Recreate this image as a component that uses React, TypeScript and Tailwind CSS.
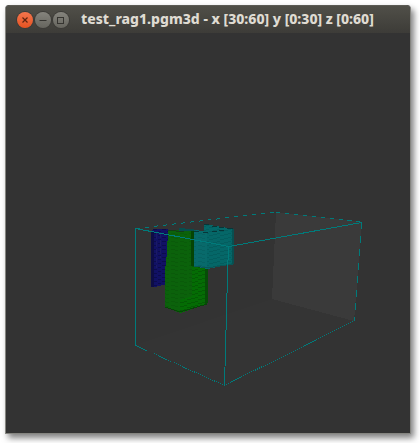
import type { ReactNode } from "react";

type ControlProps = { label: string; tone: string; children: ReactNode };

function WindowControl({ label, tone, children }: ControlProps) {
  return (
    <button
      type="button"
      aria-label={label}
      className={`flex size-4 items-center justify-center rounded-full shadow-[0_0_0_1px_#3c3b37] ${tone}`}
    >
      <svg viewBox="0 0 16 16" className="size-4" fill="none" stroke="#353430" aria-hidden="true">
        {children}
      </svg>
    </button>
  );
}

function TitleBar() {
  return (
    <header className="flex h-7 shrink-0 items-center rounded-t-sm border-t border-[#5c5b54] bg-linear-to-b from-[#504f48] to-[#3d3c38] pl-[11px]">
      <div className="flex gap-0.5">
        <WindowControl label="Close" tone="bg-linear-to-b from-[#f4754c] to-[#e5521f]">
          <path d="M5.5 5.5l5 5M10.5 5.5l-5 5" stroke="#5f2410" strokeWidth="1.2" />
        </WindowControl>
        <WindowControl label="Minimize" tone="bg-linear-to-b from-[#85847d] to-[#66655e]">
          <path d="M4.5 8.5h7" />
        </WindowControl>
        <WindowControl label="Maximize" tone="bg-linear-to-b from-[#85847d] to-[#66655e]">
          <rect x="4.5" y="5.5" width="6" height="6" />
        </WindowControl>
      </div>
      <h1 className="ml-3 -mt-0.5 font-['Noto_Sans','Open_Sans',sans-serif] text-sm leading-5 font-extrabold whitespace-nowrap text-[#dfdbd2]">
        test_rag1.pgm3d - x [30:60] y [0:30] z [0:60]
      </h1>
    </header>
  );
}

function VoxelScene() {
  return (
    <svg
      viewBox="6 33 404 400"
      className="block size-full"
      shapeRendering="crispEdges"
      role="img"
      aria-label="Bounding box with labelled voxel regions"
    >
      <defs>
        <pattern id="blue" width="9" height="4" patternUnits="userSpaceOnUse">
          <rect width="9" height="4" fill="#111164" />
          <path d="M0 1.5h4M5 3.5h3" stroke="#0c0c4c" />
        </pattern>
        <pattern id="greenLeft" width="9" height="4" patternUnits="userSpaceOnUse">
          <rect width="9" height="4" fill="#0b620b" />
          <path d="M0 1.5h4M4 2.5h3" stroke="#0a5a0a" />
        </pattern>
        <pattern id="greenRight" width="11" height="4" patternUnits="userSpaceOnUse">
          <rect width="11" height="4" fill="#046c04" />
          <path d="M0 3.5h4M4 2.5h4M8 1.5h3" stroke="#045a04" />
        </pattern>
        <pattern id="tealLeft" width="9" height="4" patternUnits="userSpaceOnUse">
          <rect width="9" height="4" fill="#086a6b" />
          <path d="M0 1.5h4M4 2.5h3" stroke="#076263" />
        </pattern>
        <pattern id="tealRight" width="11" height="4" patternUnits="userSpaceOnUse">
          <rect width="11" height="4" fill="#056768" />
          <path d="M0 3.5h4M4 2.5h4M8 1.5h3" stroke="#045d5e" />
        </pattern>
      </defs>

      <path d="M276 212L362 222L354 321L272 299Z" fill="#3a3a3a" />
      <path d="M272 299L354 321L225 385L136 345Z" fill="#343434" />

      <g stroke="#007b7b" fill="none">
        <path d="M136 228.5L276 212" strokeDasharray="4 5" />
        <path d="M276 212L361 222" strokeDasharray="4 5" />
      </g>

      <path d="M151 231L154 229H168V284L155 287H151Z" fill="url(#blue)" />
      <path d="M151 231H154V287H151Z" fill="#0d0d46" />
      <path d="M156.5 233v35M160.5 232v26" stroke="#1b1b63" strokeDasharray="6 2" />

      <path d="M168 230H192V309L180 313L165 307V271L167 253Z" fill="url(#greenLeft)" />
      <path d="M192 229H194V266L207 268V304L180 313V300L192 296Z" fill="url(#greenRight)" />
      <path d="M191 231H194V266H191Z" fill="#054405" />
      <path d="M205 269H208V303L205 305Z" fill="#064c06" />
      <path d="M165 307L180 312L207 304" stroke="#064506" fill="none" />
      <path d="M168 230h8M176 231h8M184 230h8" stroke="#143d16" />

      <path d="M179 228h6v1h9v2h-15z" fill="#074d4e" />
      <path d="M194 230L204 231V224L234 229V264L207 269L194 266Z" fill="url(#tealRight)" />
      <path d="M194 230L207 232V269L194 266Z" fill="url(#tealLeft)" />
      <path d="M232 229H234V264H232Z" fill="#085051" />
      <path d="M204 224.5h5M212 226.5h5M219 227.5h5M227 228.5h6M194 231.5h5M203 232.5h5M212 231.5h5M219 230.5h5" stroke="#073638" />
      <path d="M194 266L207 268L233 264" stroke="#0b5557" fill="none" />

      <g stroke="#007b7b" fill="none">
        <path d="M361.5 222.5L354.5 321" strokeDasharray="7 6.5" />
        <path d="M135.5 345.5L224.5 385.5L354 321" strokeDasharray="1.1 1.1" />
        <path d="M135.5 345.5V228.5L229 246.5L361.5 222.5" />
        <path d="M228.5 246L227.5 275L224.5 385.5" />
      </g>
    </svg>
  );
}

export default function App() {
  return (
    <div className="flex h-screen bg-white pt-[5px] pr-[9px] pb-[9px] pl-[5px]">
      <main className="flex min-w-0 flex-1 flex-col overflow-hidden rounded-t-sm border-r border-b border-l border-[#858580] bg-[#333333] shadow-[3px_4px_6px_#00000080]">
        <TitleBar />
        <section className="min-h-0 flex-1">
          <VoxelScene />
        </section>
      </main>
    </div>
  );
}
